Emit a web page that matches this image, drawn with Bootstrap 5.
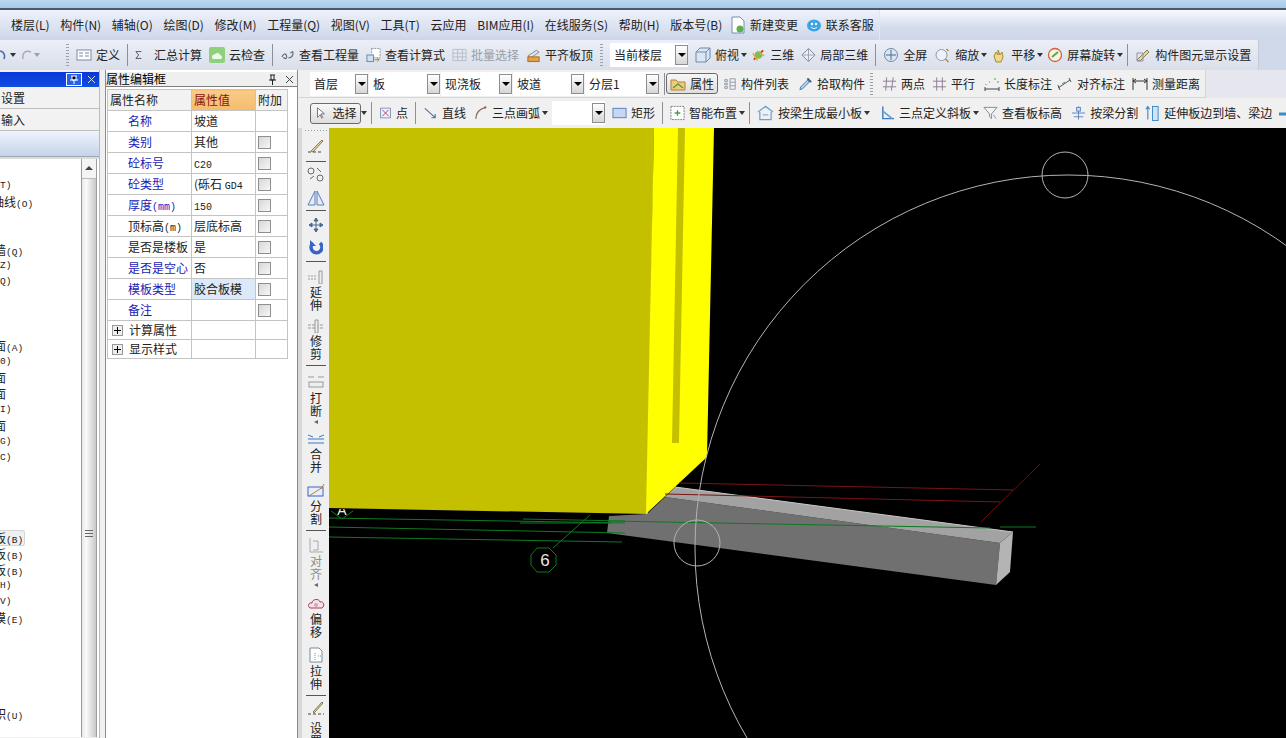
<!DOCTYPE html>
<html lang="zh-CN">
<head>
<meta charset="UTF-8">
<title>GCL</title>
<link href="https://cdn.jsdelivr.net/npm/bootstrap@5.3.0/dist/css/bootstrap.min.css" rel="stylesheet">
<style>
html, body { height: 100%; overflow: hidden; }
body { font-family: "Noto Sans CJK SC", "Liberation Sans", sans-serif; font-size: 12px; line-height: 16px; color: #222; background: #f0f0f0; width: 1286px; height: 738px; }
.app-frame { width: 1286px; height: 738px; }
.top-strip { height: 10px; background: linear-gradient(#bcd8f2, #a6c9ea); border-bottom: 2px solid #4a5a6c; flex: none; }
.menu-bar { height: 30px; flex: none; background: linear-gradient(#f7f9fd 0, #d3dbec 60%, #cfd8ea 100%); }
.menu-items { width: 880px; height: 30px; padding-left: 11px; gap: 10.7px; background: linear-gradient(#eef2fa, #cdd6e9); border-right: 1px solid #e2e6f0; }
.menu-items > span { white-space: nowrap; }
.pull-3 { margin-left: -3px; }
.tool-row { height: 30px; flex: none; background: #d0d9ea; }
.main-tools { width: 1259px; height: 30px; gap: 7px; background: linear-gradient(#eceff6, #d9dee9); border-right: 1px solid #c4cad6; overflow: hidden; }
.tool { display: inline-flex; align-items: center; gap: 4px; white-space: nowrap; flex: none; }
.tool svg, .menu-items svg { flex: none; }
.tool.off { color: #9a9fa8; }
.dd { width: 0; height: 0; border-left: 3.5px solid transparent; border-right: 3.5px solid transparent; border-top: 4px solid #333; flex: none; margin-left: -5px; margin-right: -3px; }
.dd.off { border-top-color: #9a9fa8; }
.dd.tight { margin-left: -7px; }
.sep { width: 1px; height: 22px; background: #8a8f98; flex: none; }
.grip { width: 3px; height: 22px; flex: none; background: repeating-linear-gradient(#9aa1ad 0 1px, transparent 1px 3px); }
.grip-far { margin-left: 22px; }
.combo { height: 24px; background: #fff; display: flex; align-items: center; justify-content: space-between; padding-left: 4px; flex: none; white-space: nowrap; }
.combo-btn { width: 13px; height: 20px; border: 1px solid #8e8e8e; background: linear-gradient(#fff, #d6d6d6); display: flex; align-items: center; justify-content: center; flex: none; }
.combo-btn::after { content: ""; border-left: 4px solid transparent; border-right: 4px solid transparent; border-top: 4px solid #000; }
.w-floor { width: 78px; }
.w-a { width: 58px; }
.w-b { width: 71px; }
.w-c { width: 74px; }
.w-d { width: 53px; }
.work-area { min-height: 0; }
.tree-pane { width: 99px; flex: none; background: #f0f0f0; padding-top: 2px; }
.pane-head { height: 15px; background: linear-gradient(#0a36d8, #0f4ee0); display: flex; justify-content: flex-end; align-items: center; gap: 5px; padding-right: 3px; }
.tree-tab { height: 22px; line-height: 21px; padding-left: 1px; background: #f2f2f2; border-bottom: 1px solid #bfbfbf; }
.tree-band { height: 26px; background: linear-gradient(#f0f4fb, #c4d4ea); border-bottom: 1px solid #9da6b2; }
.tree-body { height: 580px; background: #fff; border-top: 2px solid #dcdcdc; overflow: hidden; }
.tree-rows { width: 82px; padding-top: 19px; overflow: hidden; border-right: 1px solid #9b9b9b; }
.tree-line { height: 16px; line-height: 16px; white-space: nowrap; overflow: hidden; }
.tree-line.hot { background: #f0f0f0; border: 1px solid #d4d4d4; border-left: 0; border-radius: 0 3px 3px 0; width: 31px; line-height: 14px; }
.cut1 { margin-left: -8px; }
.cut2 { margin-left: -6px; }
.sim { font-family: "Liberation Mono", monospace; font-size: 10px; line-height: 1; }
.tree-line .sim { font-size: 9.5px; }
.tree-line.sim { font-size: 9.5px; line-height: 16px; }
.tree-scroll { width: 15px; background: linear-gradient(90deg, #e8e8e8, #fafafa 30%, #c8c8c8); border-right: 1px solid #9b9b9b; }
.scroll-up { height: 20px; text-align: center; background: #f4f4f4; border-bottom: 1px solid #bbb; }
.scroll-up::after { content: ""; display: inline-block; border-left: 4px solid transparent; border-right: 4px solid transparent; border-bottom: 4px solid #444; vertical-align: 2px; }
.scroll-track { padding-top: 351px; }
.scroll-grip { height: 8px; margin: 0 3px; background: repeating-linear-gradient(#666 0 1px, transparent 1px 3px); }
.sash { width: 6px; flex: none; background: #f0f0f0; border-left: 1px solid #bbb; }
.prop-pane { width: 193px; flex: none; background: #fff; border-right: 1px solid #8b8b8b; border-left: 1px solid #8b8b8b; padding-top: 2px; }
.prop-head { height: 15px; background: #efefef; border-bottom: 1px solid #7d7d7d; line-height: 14px; color: #000; display: flex; justify-content: space-between; align-items: center; padding-right: 3px; }
.prop-sheet { width: 180px; margin: 2px 0 0 1px; border-collapse: collapse; table-layout: fixed; }
.prop-sheet tr { height: 21px; }
.prop-sheet td { height: 21px; padding: 0 0 0 2px; border: 1px solid #c4c4c4; white-space: nowrap; overflow: hidden; line-height: 16px; background: #fff; color: #222; vertical-align: middle; }
.prop-sheet .head-row td { background: #f2f2f2; }
.prop-sheet .head-row td.val-head { background: linear-gradient(#f8cb88, #f5bd6c); color: #8a1010; }
.prop-sheet .group-row, .prop-sheet .group-row td { height: 19px; }
.prop-sheet td.pad { padding-left: 20px; color: #222; }
.prop-sheet td.req { color: #1a1ab4; }
.prop-sheet td.act { background: #dce9f8; }
.col-name { width: 84px; }
.col-val { width: 64px; }
.col-more { width: 32px; }
.prop-check { appearance: none; display: block; width: 13px; height: 13px; margin: 0; border: 1px solid #8f8f8f; background: linear-gradient(135deg, #d8d8d8, #f6f6f6); }
.plus-box { display: inline-block; width: 11px; height: 11px; border: 1px solid #999; background: #eee; vertical-align: -1px; margin: 0 6px 0 2px; position: relative; }
.plus-box::before { content: ""; position: absolute; left: 1px; right: 1px; top: 4px; height: 1px; background: #000; }
.plus-box::after { content: ""; position: absolute; top: 1px; bottom: 1px; left: 4px; width: 1px; background: #000; }
.editor { min-width: 0; }
.row-a { height: 28px; flex: none; background: #e6e6ee; }
.row-a-inner { width: 908px; height: 28px; gap: 1px; background: #f0f0f0; border-right: 1px solid #d5d5d5; border-bottom: 1px solid #d5d5d5; padding-left: 12px; }
.row-b { height: 30px; flex: none; gap: 7px; background: #f0f0f0; padding-left: 12px; overflow: hidden; }
.btn-on { display: inline-flex; align-items: center; justify-content: center; gap: 4px; border: 1px solid #6b6b6b; border-radius: 3px; background: linear-gradient(#f7f7f7, #dedede); height: 21px; flex: none; white-space: nowrap; }
.btn-attr { width: 52px; }
.btn-sel { width: 51px; }
.nudge-2 { margin-left: 2px; }
.nudge-6 { margin-left: 6px; }
.canvas-wrap { min-height: 0; }
.side-tools { width: 31px; flex: none; background: #f0f0f0; border-left: 4px solid #d8d8d8; overflow: hidden; }
.side-dots { width: 22px; height: 1px; margin-top: 2px; flex: none; background: repeating-linear-gradient(90deg, #9aa1ad 0 1px, transparent 1px 3px); }
.side-tool { display: flex; flex-direction: column; align-items: center; flex: none; }
.side-tool svg, .side-tools > svg { flex: none; }
.side-tool svg { margin-bottom: 2px; }
.side-tool .low { margin-bottom: 6px; }
.vtext { writing-mode: vertical-rl; letter-spacing: 1px; line-height: 12px; width: 12px; }
.side-tool.off .vtext.dim { color: #8c8c8c; }
.side-more { width: 0; height: 0; border-top: 2.500px solid transparent; border-bottom: 2.500px solid transparent; border-right: 4px solid #666; margin-top: 2px; }
.side-rule { width: 20px; height: 1px; background: #555; flex: none; }
.gap-6 { margin-top: 6px; }
.gap-7 { margin-top: 7px; }
.drawing { display: block; background: #000; flex: 1 1 auto; min-width: 0; }
</style>
</head>
<body>
<svg width="0" height="0" class="d-none" aria-hidden="true">
  <defs>
    <symbol id="i-def" viewBox="0 0 16 16"><rect x="1" y="3" width="14" height="10" fill="#fff" stroke="#7a8aa8"/><path d="M3 6h4M3 9h4M9 6h4M9 9h4" stroke="#7a8aa8"/></symbol>
    <symbol id="i-sum" viewBox="0 0 16 16"><path d="M12 3H4l4 5-4 5h8" fill="none" stroke="#444" stroke-width="1.2"/></symbol>
    <symbol id="i-cloud" viewBox="0 0 16 16"><rect width="16" height="16" rx="2" fill="#8fd07c"/><path d="M3 10c0-3 3-2 3-3 2-2 5-1 5 1 2 0 3 3 1 4H5c-1 0-2 0-2-2z" fill="#eef9ea"/></symbol>
    <symbol id="i-qty" viewBox="0 0 16 16"><path d="M2 10c2-4 4-4 5-1s-3 4-3 1M9 11c3 0 5-2 5-6M11 6l3-2" fill="none" stroke="#667" stroke-width="1.2"/></symbol>
    <symbol id="i-calc" viewBox="0 0 16 16"><rect x="6" y="1" width="9" height="10" fill="#fff" stroke="#8890a4" stroke-dasharray="2 1"/><rect x="1" y="8" width="7" height="7" fill="#cfe0f3" stroke="#6a84a8"/><path d="M9 13h5M12 11l2 2-2 2" fill="none" stroke="#a58c2c"/></symbol>
    <symbol id="i-batch" viewBox="0 0 16 16"><path d="M1 2h14v12H1zM1 6h14M1 10h14M6 2v12M11 2v12" fill="none" stroke="#b8bcc4"/></symbol>
    <symbol id="i-level" viewBox="0 0 16 16"><path d="M2 9l9-6 3 2-9 6z" fill="#dfe4ec" stroke="#7b8494"/><rect x="2" y="10" width="12" height="5" fill="#e8a040" stroke="#a66a20"/></symbol>
    <symbol id="i-cube" viewBox="0 0 16 16"><path d="M1 5l4-4h10v10l-4 4H1zM1 5h10v10M11 5l4-4" fill="#dbe6f4" stroke="#6f87a8"/></symbol>
    <symbol id="i-3d" viewBox="0 0 16 16"><path d="M3 13L13 3" stroke="#c23b2c" stroke-width="2"/><circle cx="8" cy="8" r="4" fill="#7dbb5c"/><path d="M2 6l5 8M14 9L7 4" stroke="#d8b030" stroke-width="1.5"/></symbol>
    <symbol id="i-part" viewBox="0 0 16 16"><path d="M8 1l7 7-7 7-7-7z" fill="#e9edf4" stroke="#7b8494"/><path d="M8 1v14M1 8h14" stroke="#9aa3b4"/></symbol>
    <symbol id="i-full" viewBox="0 0 16 16"><circle cx="8" cy="8" r="6.500" fill="#dbe6f4" stroke="#6f87a8"/><path d="M8 3v10M3 8h10" stroke="#50688c"/></symbol>
    <symbol id="i-zoom" viewBox="0 0 16 16"><circle cx="7" cy="8" r="5.500" fill="#eef2f8" stroke="#8c9ab0"/><path d="M11 12l3 3M12 2l2 2" stroke="#b08a30" stroke-width="1.4"/></symbol>
    <symbol id="i-pan" viewBox="0 0 16 16"><path d="M3 9l2-4 2 3V3l2 5 2-3 1 5-2 5H5z" fill="#f0d88c" stroke="#a88a34"/></symbol>
    <symbol id="i-rot" viewBox="0 0 16 16"><circle cx="8" cy="8" r="6.500" fill="#f8f4e4" stroke="#d4603c" stroke-width="1.3"/><path d="M5 10l6-5" stroke="#5aa84c" stroke-width="2"/></symbol>
    <symbol id="i-show" viewBox="0 0 16 16"><path d="M2 13L12 3l2 2L5 14z" fill="#e8d4a0" stroke="#8a7a50"/><path d="M2 6h6v8H2z" fill="none" stroke="#8a94a8"/></symbol>
    <symbol id="i-new" viewBox="0 0 16 18"><path d="M2 1h8l4 4v12H2z" fill="#fff" stroke="#6f8fb8"/><circle cx="10" cy="13" r="3.500" fill="#5fb04c"/></symbol>
    <symbol id="i-help" viewBox="0 0 16 16"><ellipse cx="8" cy="8.500" rx="7" ry="6" fill="#3fa4e4"/><circle cx="6" cy="7" r="1.200" fill="#fff"/><circle cx="10" cy="7" r="1.200" fill="#fff"/><path d="M5 10c2 2 4 2 6 0" fill="none" stroke="#fff"/></symbol>
    <symbol id="i-attr" viewBox="0 0 16 16"><path d="M1 4h5l2 2h7v8H1z" fill="#f0cc78" stroke="#a8843c"/><path d="M3 12l5-4 5 4" fill="none" stroke="#5a9a4c" stroke-width="1.5"/></symbol>
    <symbol id="i-list" viewBox="0 0 16 16"><path d="M2 3h3v2H2zM2 7h3v2H2zM2 11h3v2H2zM8 2h6v12H8zM8 6h6M8 10h6" fill="none" stroke="#8a94a8"/></symbol>
    <symbol id="i-pick" viewBox="0 0 16 16"><path d="M2 14l1-3 7-7 2 2-7 7z" fill="#b4d4ee" stroke="#4a78a8"/><path d="M10 2l4 4" stroke="#3a5a88" stroke-width="2"/></symbol>
    <symbol id="i-two" viewBox="0 0 16 16"><path d="M1 5h14M1 11h14M5 1l-1 14M12 1l-2 14" stroke="#8a7a94"/></symbol>
    <symbol id="i-para" viewBox="0 0 16 16"><path d="M1 5h14M1 11h14M5 1v14M11 1v14" stroke="#8a7a94"/></symbol>
    <symbol id="i-dim" viewBox="0 0 16 16"><path d="M1 13h14M1 11v4M15 11v4" stroke="#444"/><path d="M2 8v1M5 6h1M10 3h2M14 5v2" stroke="#4a9a4c"/></symbol>
    <symbol id="i-align" viewBox="0 0 16 16"><path d="M1 12L13 4M1 9l2 5M12 2l2 4" fill="none" stroke="#555"/><path d="M5 8l3-2" stroke="#4a9a4c"/></symbol>
    <symbol id="i-meas" viewBox="0 0 16 16"><path d="M1 2v12M15 2v12M1 5h14" stroke="#333"/><path d="M1 5l3-2M1 5l3 2M15 5l-3-2M15 5l-3 2" stroke="#333"/></symbol>
    <symbol id="i-sel" viewBox="0 0 16 16"><path d="M4 2v11l3-3 2 4 1-1-2-4h4z" fill="#fff" stroke="#667"/></symbol>
    <symbol id="i-pt" viewBox="0 0 16 16"><rect x="2" y="2" width="12" height="12" fill="#eef2fa" stroke="#6f87b8"/><path d="M4 4l8 8M12 4l-8 8" stroke="#c0406c" stroke-width="1.2"/></symbol>
    <symbol id="i-line" viewBox="0 0 16 16"><path d="M2 3l11 10M13 9v4H9" fill="none" stroke="#4a6ea8" stroke-width="1.2"/></symbol>
    <symbol id="i-arc" viewBox="0 0 16 16"><path d="M3 14C3 8 7 3 14 2" fill="none" stroke="#7a6a60" stroke-width="1.3"/><rect x="12" y="1" width="2" height="2" fill="#c23b2c"/></symbol>
    <symbol id="i-rect" viewBox="0 0 16 16"><rect x="1" y="3" width="14" height="10" fill="#c4d8f6" stroke="#5a7eb8"/></symbol>
    <symbol id="i-smart" viewBox="0 0 16 16"><rect x="1" y="1" width="14" height="14" fill="#fff" stroke="#778" stroke-dasharray="2 1"/><path d="M5 8h6M8 5v6" stroke="#4a9a4c" stroke-width="1.4"/></symbol>
    <symbol id="i-gen" viewBox="0 0 18 16"><path d="M1 7l8-6 8 6M3 7v8h12V7" fill="none" stroke="#6ba0d0" stroke-width="1.3"/><path d="M6 10h6" stroke="#6ba0d0"/></symbol>
    <symbol id="i-slope" viewBox="0 0 16 16"><path d="M3 1v13h12" fill="none" stroke="#3f78c0" stroke-width="1.500"/><path d="M3 6l10 8" stroke="#6ba0d0" stroke-width="2"/></symbol>
    <symbol id="i-funnel" viewBox="0 0 16 16"><path d="M1 2h14L9 9v5L7 12V9z" fill="#f4f4f4" stroke="#7a8aa0"/><path d="M11 10l3 4" stroke="#8a9ab0"/></symbol>
    <symbol id="i-split" viewBox="0 0 16 16"><path d="M1 8h14M3 12h10M8 1v14" stroke="#5a84c0"/><rect x="6" y="2" width="4" height="4" fill="#cfe0f3" stroke="#5a84c0"/></symbol>
    <symbol id="i-extend" viewBox="0 0 16 18"><path d="M3 16V3M1 5l2-3 2 3" fill="none" stroke="#3a8ac8" stroke-width="1.2"/><rect x="8" y="2" width="6" height="15" fill="#cfe4f6" stroke="#3a8ac8"/></symbol>
  </defs>
</svg>

<div class="app-frame d-flex flex-column">
  <div class="top-strip"></div>

  <div class="menu-bar d-flex">
    <div class="menu-items d-flex align-items-center">
      <span>楼层(L)</span><span>构件(N)</span><span>辅轴(O)</span><span>绘图(D)</span><span>修改(M)</span><span>工程量(Q)</span><span>视图(V)</span><span>工具(T)</span><span>云应用</span><span>BIM应用(I)</span><span>在线服务(S)</span><span>帮助(H)</span><span>版本号(B)</span>
      <span class="tool pull-3"><svg width="16" height="18"><use href="#i-new"/></svg>新建变更</span>
      <span class="tool pull-3"><svg width="16" height="16"><use href="#i-help"/></svg>联系客服</span>
    </div>
  </div>

  <div class="tool-row d-flex">
    <div class="main-tools d-flex align-items-center">
      <span class="tool"><svg width="8" height="16" viewBox="8 0 8 16"><path d="M4 4C10 3 14 6 12 12" fill="none" stroke="#4a6ea8" stroke-width="1.600"/></svg></span>
      <span class="dd"></span>
      <span class="tool off"><svg width="12" height="16"><path d="M11 5C5 3 2 6 3 12" fill="none" stroke="#aab" stroke-width="1.500"/></svg></span>
      <span class="dd off"></span>
      <span class="grip grip-far"></span>
      <span class="tool"><svg width="16" height="16"><use href="#i-def"/></svg>定义</span>
      <span class="sep"></span>
      <span class="tool gap-2"><svg width="11" height="16" viewBox="2 0 12 16"><use href="#i-sum"/></svg>汇总计算</span>
      <span class="tool"><svg width="16" height="16"><use href="#i-cloud"/></svg>云检查</span>
      <span class="sep"></span>
      <span class="tool"><svg width="15" height="16"><use href="#i-qty"/></svg>查看工程量</span>
      <span class="tool"><svg width="15" height="16"><use href="#i-calc"/></svg>查看计算式</span>
      <span class="tool off"><svg width="15" height="16"><use href="#i-batch"/></svg>批量选择</span>
      <span class="tool"><svg width="15" height="16"><use href="#i-level"/></svg>平齐板顶</span>
      <span class="grip"></span>
      <div class="combo w-floor">当前楼层<span class="combo-btn"></span></div>
      <span class="tool"><svg width="16" height="16"><use href="#i-cube"/></svg>俯视</span>
      <span class="dd"></span>
      <span class="tool"><svg width="15" height="16"><use href="#i-3d"/></svg>三维</span>
      <span class="tool"><svg width="15" height="16"><use href="#i-part"/></svg>局部三维</span>
      <span class="sep"></span>
      <span class="tool"><svg width="16" height="16"><use href="#i-full"/></svg>全屏</span>
      <span class="tool"><svg width="17" height="16"><use href="#i-zoom"/></svg>缩放</span>
      <span class="dd"></span>
      <span class="tool"><svg width="16" height="16"><use href="#i-pan"/></svg>平移</span>
      <span class="dd"></span>
      <span class="tool"><svg width="16" height="16"><use href="#i-rot"/></svg>屏幕旋转</span>
      <span class="dd"></span>
      <span class="sep"></span>
      <span class="tool"><svg width="16" height="16"><use href="#i-show"/></svg>构件图元显示设置</span>
    </div>
  </div>

  <div class="work-area d-flex flex-grow-1">
    <div class="tree-pane d-flex flex-column">
      <div class="pane-head">
        <svg width="16" height="13"><rect x=".5" y=".5" width="15" height="12" fill="#2a60e8" stroke="#fff"/><path d="M5 3h6M6 3v4h4V3M4 7h8M8 7v4" stroke="#fff"/></svg>
        <svg width="9" height="9"><path d="M1 1l7 7M8 1L1 8" stroke="#cfe0ff"/></svg>
      </div>
      <div class="tree-tab">设置</div>
      <div class="tree-tab">输入</div>
      <div class="tree-band"></div>
      <div class="tree-body d-flex">
        <div class="tree-rows">
          <div class="tree-line sim">T)</div>
          <div class="tree-line cut1">轴线<span class="sim">(O)</span></div>
          <div class="tree-line"></div>
          <div class="tree-line"></div>
          <div class="tree-line cut2">墙<span class="sim">(Q)</span></div>
          <div class="tree-line sim">Z)</div>
          <div class="tree-line sim">Q)</div>
          <div class="tree-line"></div>
          <div class="tree-line"></div>
          <div class="tree-line"></div>
          <div class="tree-line cut2">面<span class="sim">(A)</span></div>
          <div class="tree-line sim">0)</div>
          <div class="tree-line cut2">面</div>
          <div class="tree-line cut2">面</div>
          <div class="tree-line sim">I)</div>
          <div class="tree-line cut2">面</div>
          <div class="tree-line sim">G)</div>
          <div class="tree-line sim">C)</div>
          <div class="tree-line"></div>
          <div class="tree-line"></div>
          <div class="tree-line"></div>
          <div class="tree-line"></div>
          <div class="tree-line hot cut2">板<span class="sim">(B)</span></div>
          <div class="tree-line cut2">板<span class="sim">(B)</span></div>
          <div class="tree-line cut2">板<span class="sim">(B)</span></div>
          <div class="tree-line sim">H)</div>
          <div class="tree-line sim">V)</div>
          <div class="tree-line cut2">模<span class="sim">(E)</span></div>
          <div class="tree-line"></div>
          <div class="tree-line"></div>
          <div class="tree-line"></div>
          <div class="tree-line"></div>
          <div class="tree-line"></div>
          <div class="tree-line cut2">积<span class="sim">(U)</span></div>
        </div>
        <div class="tree-scroll d-flex flex-column">
          <div class="scroll-up"></div>
          <div class="scroll-track"><div class="scroll-grip"></div></div>
        </div>
      </div>
    </div>
    <div class="sash"></div>
    <div class="prop-pane">
      <div class="prop-head">属性编辑框
        <span class="d-flex align-items-center gap-2">
          <svg width="9" height="11"><path d="M2 1h5M3 1v5h3V1M1 6h7M4.500 6v5" stroke="#222" fill="none"/></svg>
          <svg width="9" height="9"><path d="M1 1l7 7M8 1L1 8" stroke="#444"/></svg>
        </span>
      </div>
      <table class="prop-sheet">
        <colgroup><col class="col-name"><col class="col-val"><col class="col-more"></colgroup>
        <tr class="head-row"><td>属性名称</td><td class="val-head">属性值</td><td>附加</td></tr>
        <tr><td class="pad req">名称</td><td>坡道</td><td></td></tr>
        <tr><td class="pad req">类别</td><td>其他</td><td><input class="prop-check" type="checkbox" disabled></td></tr>
        <tr><td class="pad req">砼标号</td><td><span class="sim">C20</span></td><td><input class="prop-check" type="checkbox" disabled></td></tr>
        <tr><td class="pad req">砼类型</td><td>(砾石 <span class="sim">GD4</span></td><td><input class="prop-check" type="checkbox" disabled></td></tr>
        <tr><td class="pad req">厚度<span class="sim">(mm)</span></td><td><span class="sim">150</span></td><td><input class="prop-check" type="checkbox" disabled></td></tr>
        <tr><td class="pad">顶标高<span class="sim">(m)</span></td><td>层底标高</td><td><input class="prop-check" type="checkbox" disabled></td></tr>
        <tr><td class="pad">是否是楼板</td><td>是</td><td><input class="prop-check" type="checkbox" disabled></td></tr>
        <tr><td class="pad req">是否是空心</td><td>否</td><td><input class="prop-check" type="checkbox" disabled></td></tr>
        <tr><td class="pad req">模板类型</td><td class="act">胶合板模</td><td><input class="prop-check" type="checkbox" disabled></td></tr>
        <tr><td class="pad req">备注</td><td></td><td><input class="prop-check" type="checkbox" disabled></td></tr>
        <tr class="group-row"><td><span class="plus-box"></span>计算属性</td><td></td><td></td></tr>
        <tr class="group-row"><td><span class="plus-box"></span>显示样式</td><td></td><td></td></tr>
      </table>
    </div>

    <div class="editor d-flex flex-column flex-grow-1">
      <div class="row-a">
        <div class="row-a-inner d-flex align-items-center">
          <div class="combo w-a">首层<span class="combo-btn"></span></div>
          <div class="combo w-b">板<span class="combo-btn"></span></div>
          <div class="combo w-b">现浇板<span class="combo-btn"></span></div>
          <div class="combo w-b">坡道<span class="combo-btn"></span></div>
          <div class="combo w-c">分层1<span class="combo-btn"></span></div>
          <span class="sep ms-1"></span>
          <span class="btn-on btn-attr"><svg width="16" height="16"><use href="#i-attr"/></svg>属性</span>
          <span class="tool ms-1"><svg width="14" height="16"><use href="#i-list"/></svg>构件列表</span>
          <span class="tool ms-2"><svg width="15" height="16"><use href="#i-pick"/></svg>拾取构件</span>
          <span class="grip ms-1"></span>
          <span class="tool ms-2"><svg width="15" height="16"><use href="#i-two"/></svg>两点</span>
          <span class="tool nudge-6"><svg width="15" height="16"><use href="#i-para"/></svg>平行</span>
          <span class="tool ms-2"><svg width="16" height="16"><use href="#i-dim"/></svg>长度标注</span>
          <span class="tool ms-1"><svg width="16" height="16"><use href="#i-align"/></svg>对齐标注</span>
          <span class="tool nudge-6"><svg width="16" height="16"><use href="#i-meas"/></svg>测量距离</span>
        </div>
      </div>
      <div class="row-b d-flex align-items-center">
        <span class="btn-on btn-sel"><svg width="14" height="16"><use href="#i-sel"/></svg>选择</span>
        <span class="dd tight"></span>
        <span class="sep"></span>
        <span class="tool"><svg width="13" height="16"><use href="#i-pt"/></svg>点</span>
        <span class="sep"></span>
        <span class="tool"><svg width="15" height="16"><use href="#i-line"/></svg>直线</span>
        <span class="tool"><svg width="15" height="16"><use href="#i-arc"/></svg>三点画弧</span>
        <span class="dd"></span>
        <div class="combo w-d"><span></span><span class="combo-btn"></span></div>
        <span class="tool"><svg width="15" height="16"><use href="#i-rect"/></svg>矩形</span>
        <span class="sep"></span>
        <span class="tool"><svg width="15" height="16"><use href="#i-smart"/></svg>智能布置</span>
        <span class="dd"></span>
        <span class="sep"></span>
        <span class="tool"><svg width="17" height="16"><use href="#i-gen"/></svg>按梁生成最小板</span>
        <span class="dd"></span>
        <span class="tool nudge-6"><svg width="15" height="16"><use href="#i-slope"/></svg>三点定义斜板</span>
        <span class="dd"></span>
        <span class="tool"><svg width="15" height="16"><use href="#i-funnel"/></svg>查看板标高</span>
        <span class="tool nudge-2"><svg width="15" height="16"><use href="#i-split"/></svg>按梁分割</span>
        <span class="tool"><svg width="15" height="18"><use href="#i-extend"/></svg>延伸板边到墙、梁边</span>
        <span class="tool"><svg width="12" height="16"><path d="M0 9h12" stroke="#3a8ac8" stroke-width="3"/></svg></span>
      </div>
      <div class="canvas-wrap d-flex flex-grow-1">
        <div class="side-tools d-flex flex-column align-items-center">
          <div class="side-dots"></div>
          <svg class="gap-6" width="18" height="18"><path d="M4 14L15 3l1 1L6 15z" fill="#e8d4a0" stroke="#8a7a50"/><path d="M1 15h15" stroke="#444" stroke-dasharray="3 2"/></svg>
          <div class="side-rule gap-6"></div>
          <svg class="mt-1" width="18" height="16"><circle cx="4" cy="5" r="3" fill="none" stroke="#667"/><circle cx="13" cy="12" r="3" fill="none" stroke="#667"/><path d="M10 2l4 4M3 13l4-3" stroke="#667"/></svg>
          <svg class="mt-2" width="18" height="16"><path d="M8 1L1 15h7zM10 1l7 14h-7z" fill="#e4ecf8" stroke="#5a7eb8"/></svg>
          <div class="side-rule mt-1"></div>
          <svg class="gap-6" width="16" height="16"><path d="M8 1v14M1 8h14M8 1L6 4h4zM8 15l-2-3h4zM1 8l3-2v4zM15 8l-3-2v4z" fill="#4a6a94" stroke="#4a6a94"/></svg>
          <svg class="gap-6" width="14" height="16"><path d="M11 4A5.500 5.500 0 1 1 4 4" fill="none" stroke="#3a62c8" stroke-width="3.500"/><path d="M1 1v6h6z" fill="#3a62c8"/></svg>
          <div class="side-rule gap-6"></div>
          <div class="side-tool mt-2"><svg width="18" height="14"><path d="M1 6h8M1 9h8" stroke="#999" stroke-dasharray="2 1"/><path d="M12 1h3v13h-3z" fill="#eee" stroke="#999"/></svg><span class="vtext">延伸</span></div>
          <div class="side-tool gap-7"><svg width="18" height="14"><path d="M1 6h16M1 9h16" stroke="#999" stroke-dasharray="3 1"/><path d="M8 1h3v13H8z" fill="#eee" stroke="#999"/></svg><span class="vtext">修剪</span></div>
          <div class="side-rule mt-1"></div>
          <div class="side-tool mt-2"><svg width="18" height="16"><path d="M1 3h6M11 3h6" stroke="#999"/><rect x="2" y="8" width="14" height="5" fill="#eee" stroke="#999"/></svg><span class="vtext">打断</span><span class="side-more"></span></div>
          <div class="side-tool mt-2"><svg width="18" height="14"><path d="M1 3l5 2M17 3l-5 2M1 7h16M1 11h16" stroke="#3a78c8"/></svg><span class="vtext">合并</span></div>
          <div class="side-tool mt-2"><svg width="18" height="16"><rect x="1" y="5" width="15" height="9" fill="#e8eef8" stroke="#3a62c8"/><path d="M2 14L16 5M14 7l3-5" stroke="#a8843c"/></svg><span class="vtext">分割</span></div>
          <div class="side-rule mt-1"></div>
          <div class="side-tool off gap-6"><svg width="18" height="16"><path d="M3 1v14h13M6 4h5v9H6" fill="#eee" stroke="#aaa"/></svg><span class="vtext dim">对齐</span><span class="side-more"></span></div>
          <div class="side-tool mt-2"><svg width="18" height="16"><path d="M3 13c-3-2-1-6 2-5 0-4 7-5 8-1 4-1 5 4 2 6z" fill="#f4e4e8" stroke="#a83a5a"/><circle cx="9" cy="10" r="2" fill="#e0a0b0"/></svg><span class="vtext">偏移</span></div>
          <div class="side-tool mt-2"><svg width="18" height="16"><path d="M3 1h9l3 3v11H3z" fill="#fff" stroke="#7a8aa0"/><path d="M8 6v7M11 9h3" stroke="#7a8aa0" stroke-dasharray="1 1"/></svg><span class="vtext">拉伸</span></div>
          <div class="side-rule mt-1"></div>
          <div class="side-tool mt-1"><svg class="low" width="18" height="16"><path d="M6 12L15 2l1 1-9 10z" fill="#e8d4a0" stroke="#8a7a50"/><path d="M1 14h16" stroke="#444" stroke-dasharray="3 2"/></svg><span class="vtext">设置</span></div>
        </div>
        <svg class="drawing" width="957" height="610" viewBox="329 128 957 610">
          <!-- beam -->
          <polygon points="609,516 647,514 665,497 1000,543 996,585 607,533" fill="#707070"/>
          <polygon points="665,497 675,487 1013,532 1000,543" fill="#a2a2a2"/>
          <polygon points="1000,543 1013,532 1010,572 996,585" fill="#b4b4b4"/>
          <path d="M675,487L1013,532" stroke="#c8c8c8" fill="none"/>
          <!-- yellow slab -->
          <polygon points="329,128 654,128 648,514 329,508" fill="#c4c000"/>
          <polygon points="654,128 714,128 707,457 646,514" fill="#ffff00"/>
          <polygon points="678,128 685,128 679,443 672,443" fill="#c4c000"/>
          <!-- axis lines -->
          <g fill="none" stroke="#7a1414" stroke-width="1">
            <path d="M679,483L1013,490M665,494L1000,502"/>
            <path d="M1040,464L981,522" stroke="#6a1010"/>
          </g>
          <g fill="none" stroke="#0c7a20" stroke-width="1">
            <path d="M329,518L625,523M329,527L625,533M329,537L622,542M523,519L625,521M520,523L612,523"/>
            <path d="M609,521L990,528M1000,527L1036,527"/>
          </g>
          <path d="M590,515L553,548" fill="none" stroke="#0c7a20"/>
          <polygon points="531,555 537,548 549,548 556,555 556,565 549,572 537,572 531,565" fill="none" stroke="#0c7a20"/>
          <text x="545" y="566" fill="#e8e8e8" font-size="17" font-family="Liberation Sans, sans-serif" text-anchor="middle">6</text>
          <polyline points="331,511 342,519 353,511" fill="none" stroke="#0c7a20"/>
          <text x="342" y="515" fill="#e8e8e8" font-size="14" font-family="Liberation Sans, sans-serif" text-anchor="middle" clip-path="url(#below-slab)">A</text>
          <clipPath id="below-slab"><rect x="329" y="509" width="30" height="12"/></clipPath>
          <!-- view cube circle -->
          <g fill="none" stroke="#b4b4b4" stroke-width="1">
            <circle cx="1068" cy="548" r="373"/>
            <circle cx="1065" cy="175" r="23"/>
            <circle cx="697" cy="543" r="23"/>
          </g>
        </svg>
      </div>
    </div>
  </div>
</div>
<script src="https://cdn.jsdelivr.net/npm/bootstrap@5.3.0/dist/js/bootstrap.bundle.min.js"></script>
</body>
</html>
